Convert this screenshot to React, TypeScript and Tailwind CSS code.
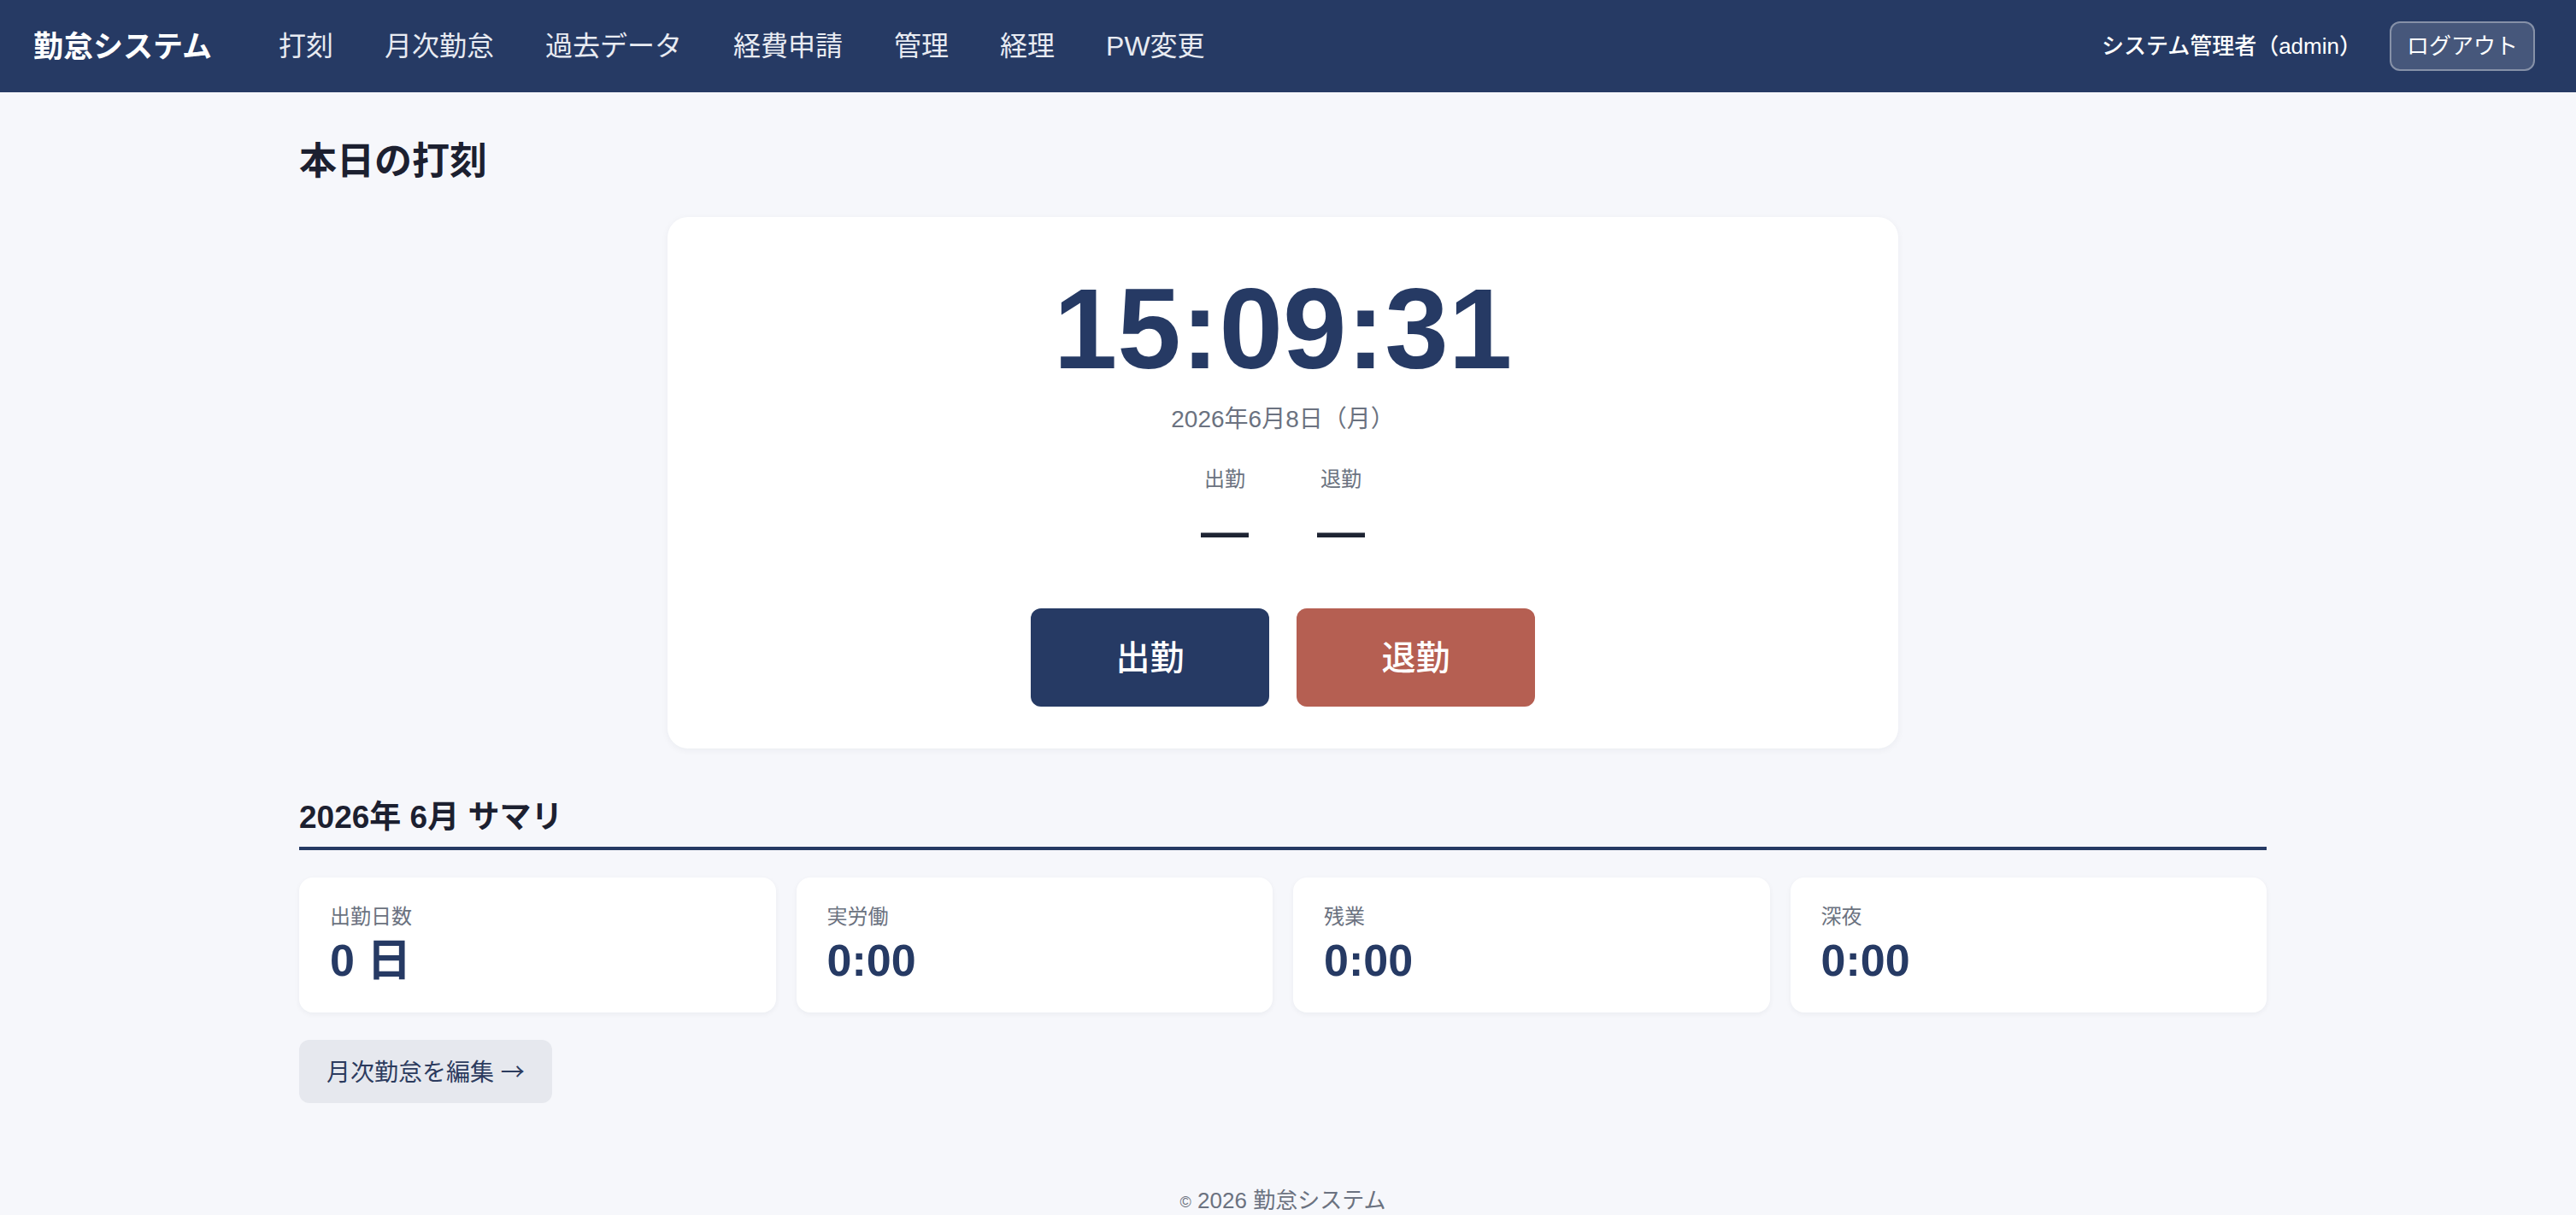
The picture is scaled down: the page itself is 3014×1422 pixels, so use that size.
import React from "react";

const navItems = ["打刻", "月次勤怠", "過去データ", "経費申請", "管理", "経理", "PW変更"];

const stats = [
  { label: "出勤日数", value: "0 日" },
  { label: "実労働", value: "0:00" },
  { label: "残業", value: "0:00" },
  { label: "深夜", value: "0:00" },
];

export default function App() {
  return (
    <div className="min-h-screen bg-[#f6f7fb] font-['Liberation_Sans','Noto_Sans_CJK_JP',sans-serif] flex flex-col">
      <header className="h-[108px] bg-[#263a64] flex items-center pl-[39px] pr-[48px]">
        <div className="text-white text-[35px] font-bold leading-none">勤怠システム</div>
        <nav className="ml-[78px] flex gap-[60px] text-[32px] text-[#e8ebf2] leading-none">
          {navItems.map((n) => (
            <span key={n}>{n}</span>
          ))}
        </nav>
        <div className="ml-auto flex items-center gap-[33px]">
          <span className="text-white text-[26px] font-medium">システム管理者（admin）</span>
          <button className="h-[58px] px-[18px] rounded-[12px] border-2 border-white/35 bg-white/15 text-white text-[26px]">
            ログアウト
          </button>
        </div>
      </header>

      <main className="pr-[12px]">
        <div className="mx-auto w-[2302px]">
          <h1 className="mt-[49px] text-[44px] font-bold leading-[64px] text-[#1c2030]">本日の打刻</h1>

          <section className="mt-[33px] mx-auto w-[1440px] rounded-[24px] bg-white shadow-[0_2px_8px_rgba(20,30,60,0.05)] pt-[64px] pb-[49px] flex flex-col items-center">
            <div className="text-[134px] leading-[134px] font-bold text-[#263a64] tabular-nums">15:09:31</div>
            <div className="mt-[19px] text-[28px] leading-[40px] text-[#6b7280]">2026年6月8日（月）</div>
            <div className="mt-[34px] flex gap-[80px]">
              {["出勤", "退勤"].map((l) => (
                <div key={l} className="flex flex-col items-center">
                  <div className="text-[24px] leading-[32px] text-[#6b7280]">{l}</div>
                  <div className="mt-[17px] text-[56px] leading-[56px] font-bold text-[#1e2433]">—</div>
                </div>
              ))}
            </div>
            <div className="mt-[62px] flex gap-[32px]">
              <button className="w-[279px] h-[115px] rounded-[12px] bg-[#263a64] text-white text-[40px] font-medium">出勤</button>
              <button className="w-[279px] h-[115px] rounded-[12px] bg-[#b55f52] text-white text-[40px] font-medium">退勤</button>
            </div>
          </section>

          <h2 className="mt-[57px] text-[37px] leading-[48px] font-bold text-[#1c2030] pb-[10px] border-b-4 border-[#263a64]">
            2026年 6月 サマリ
          </h2>

          <div className="mt-[32px] grid grid-cols-4 gap-[24px]">
            {stats.map((s) => (
              <div key={s.label} className="h-[158px] rounded-[16px] bg-white shadow-[0_2px_6px_rgba(20,30,60,0.05)] px-[36px] pt-[30px]">
                <div className="text-[24px] leading-[32px] text-[#6b7280]">{s.label}</div>
                <div className="mt-[5px] text-[52px] leading-[60px] font-bold text-[#263a64]">{s.value}</div>
              </div>
            ))}
          </div>

          <button className="mt-[32px] h-[74px] px-[32px] rounded-[12px] bg-[#e6e8ee] text-[#2c3b5e] text-[28px]">
            月次勤怠を編集 <span className="font-['Noto_Sans_CJK_JP',sans-serif]">→</span>
          </button>
        </div>
      </main>

      <footer className="pr-[12px] mt-[96px] pb-[20px] text-center text-[26px] leading-[36px] text-[#6b7280]">
        <span className="text-[18px] align-middle">©</span> 2026 勤怠システム
      </footer>
    </div>
  );
}
